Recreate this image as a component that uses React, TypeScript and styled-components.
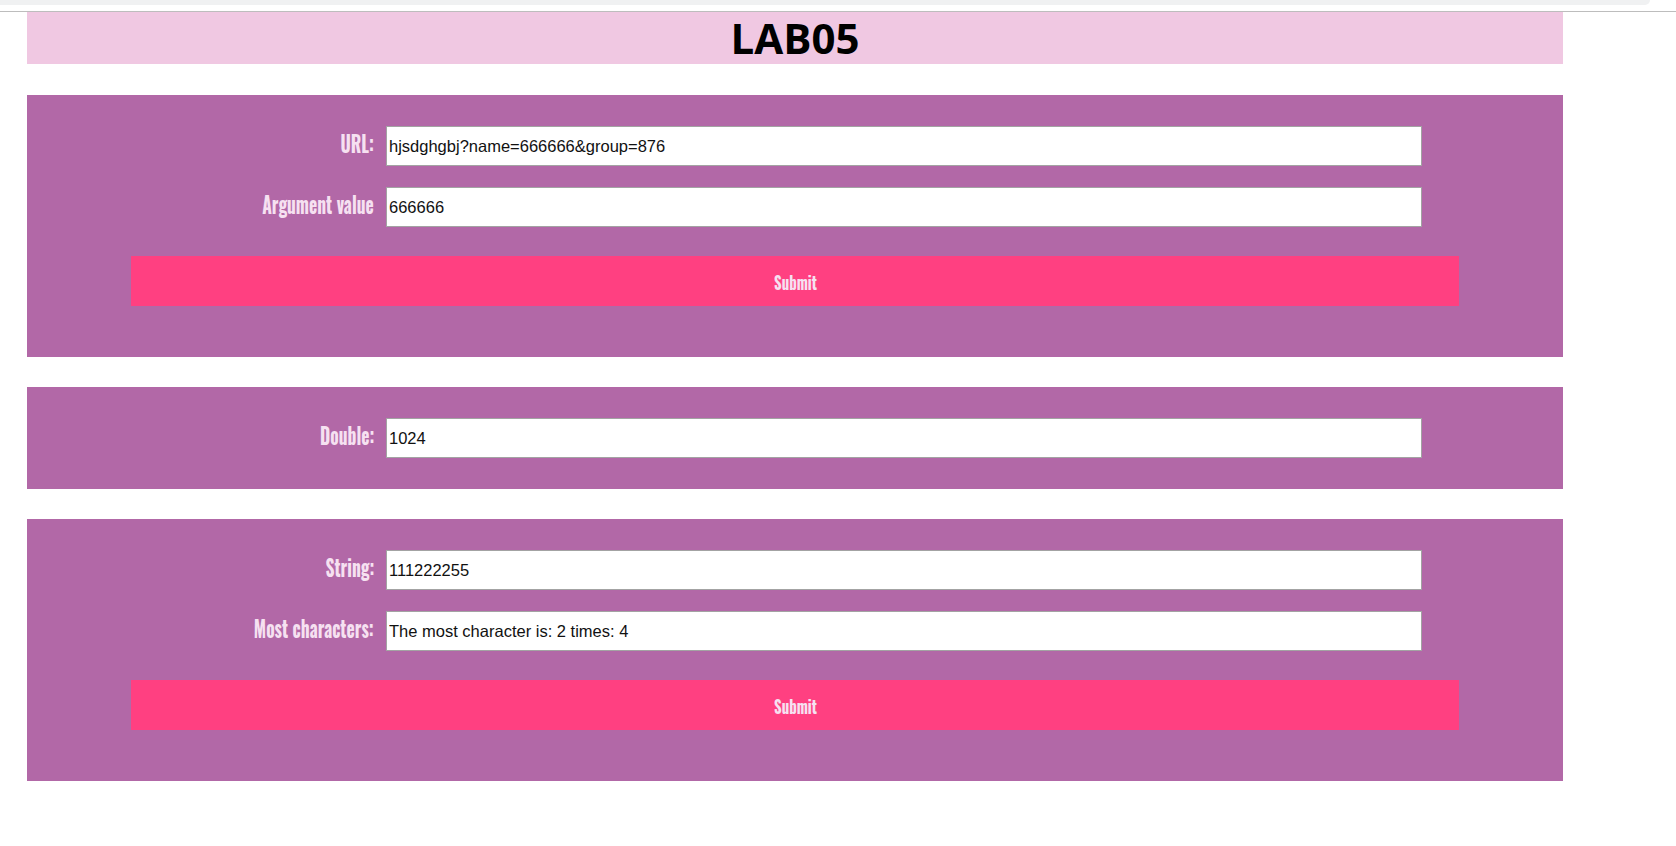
import React from "react";
import styled, { createGlobalStyle } from "styled-components";

const GlobalStyle = createGlobalStyle`
  html, body { margin: 0; padding: 0; background: #ffffff; }
  body { font-family: "Liberation Sans", Arial, sans-serif; }
`;

const BrowserEdge = styled.div`
  height: 11px;
  border-bottom: 1px solid #bdbdbd;
  background: #ffffff;
`;

const EdgeStrip = styled.div`
  height: 5px;
  width: calc(100% - 26px);
  background: #f0f1f2;
  border-bottom-right-radius: 8px;
`;

const Page = styled.main`
  width: 1536px;
  padding-left: 27px;
  display: flex;
  flex-direction: column;
  gap: 30px;
`;

const Header = styled.header`
  height: 52px;
  background: #f0c8e2;
  display: flex;
  align-items: center;
  justify-content: center;
  margin-bottom: 1px;
`;

const Title = styled.h1`
  margin: 0;
  font-family: "Open Sans", "DejaVu Sans", sans-serif;
  font-weight: 700;
  font-size: 42px;
  line-height: 52px;
  color: #000000;
`;

const Panel = styled.section<{ $withButton?: boolean }>`
  background: #b268a7;
  padding: 31px 104px ${(p) => (p.$withButton ? "51px" : "31px")};
  display: flex;
  flex-direction: column;
`;

const Rows = styled.div`
  display: flex;
  flex-direction: column;
  gap: 21px;
`;

const Row = styled.div`
  display: grid;
  grid-template-columns: 243px 1036px;
  column-gap: 12px;
  align-items: center;
`;

const Label = styled.label`
  text-align: right;
  white-space: nowrap;
  margin-top: -5px;
`;

const NarrowText = styled.span<{ $size: number; $scale: number; $origin: string }>`
  display: inline-block;
  font-family: "Oswald", "DejaVu Sans Condensed", sans-serif;
  font-weight: 700;
  font-size: ${(p) => p.$size}px;
  line-height: 1.2;
  color: #f6e1f1;
  transform: scaleX(${(p) => p.$scale});
  transform-origin: ${(p) => p.$origin} center;
`;

const Input = styled.input`
  box-sizing: border-box;
  height: 40px;
  width: 100%;
  margin: 0;
  padding: 0 2px;
  border: 1px solid #a3a3a3;
  background: #ffffff;
  font-family: "Liberation Sans", Arial, sans-serif;
  font-size: 16.5px;
  color: #111111;
  outline: none;
`;

const SubmitButton = styled.button`
  margin-top: 29px;
  height: 50px;
  width: 100%;
  border: none;
  padding: 0;
  background: #ff4081;
  display: flex;
  align-items: center;
  justify-content: center;
  cursor: pointer;
`;

type Field = { label: string; value: string };

const FormPanel: React.FC<{ fields: Field[]; withButton?: boolean }> = ({ fields, withButton }) => (
  <Panel $withButton={withButton}>
    <Rows>
      {fields.map((f) => (
        <Row key={f.label}>
          <Label>
            <NarrowText $size={23} $scale={0.76} $origin="right">
              {f.label}
            </NarrowText>
          </Label>
          <Input defaultValue={f.value} />
        </Row>
      ))}
    </Rows>
    {withButton && (
      <SubmitButton type="button">
        <NarrowText $size={19} $scale={0.78} $origin="center">
          Submit
        </NarrowText>
      </SubmitButton>
    )}
  </Panel>
);

export default function App() {
  return (
    <>
      <GlobalStyle />
      <BrowserEdge>
        <EdgeStrip />
      </BrowserEdge>
      <Page>
        <Header>
          <Title>LAB05</Title>
        </Header>
        <FormPanel
          withButton
          fields={[
            { label: "URL:", value: "hjsdghgbj?name=666666&group=876" },
            { label: "Argument value", value: "666666" },
          ]}
        />
        <FormPanel fields={[{ label: "Double:", value: "1024" }]} />
        <FormPanel
          withButton
          fields={[
            { label: "String:", value: "111222255" },
            { label: "Most characters:", value: "The most character is: 2 times: 4" },
          ]}
        />
      </Page>
    </>
  );
}
